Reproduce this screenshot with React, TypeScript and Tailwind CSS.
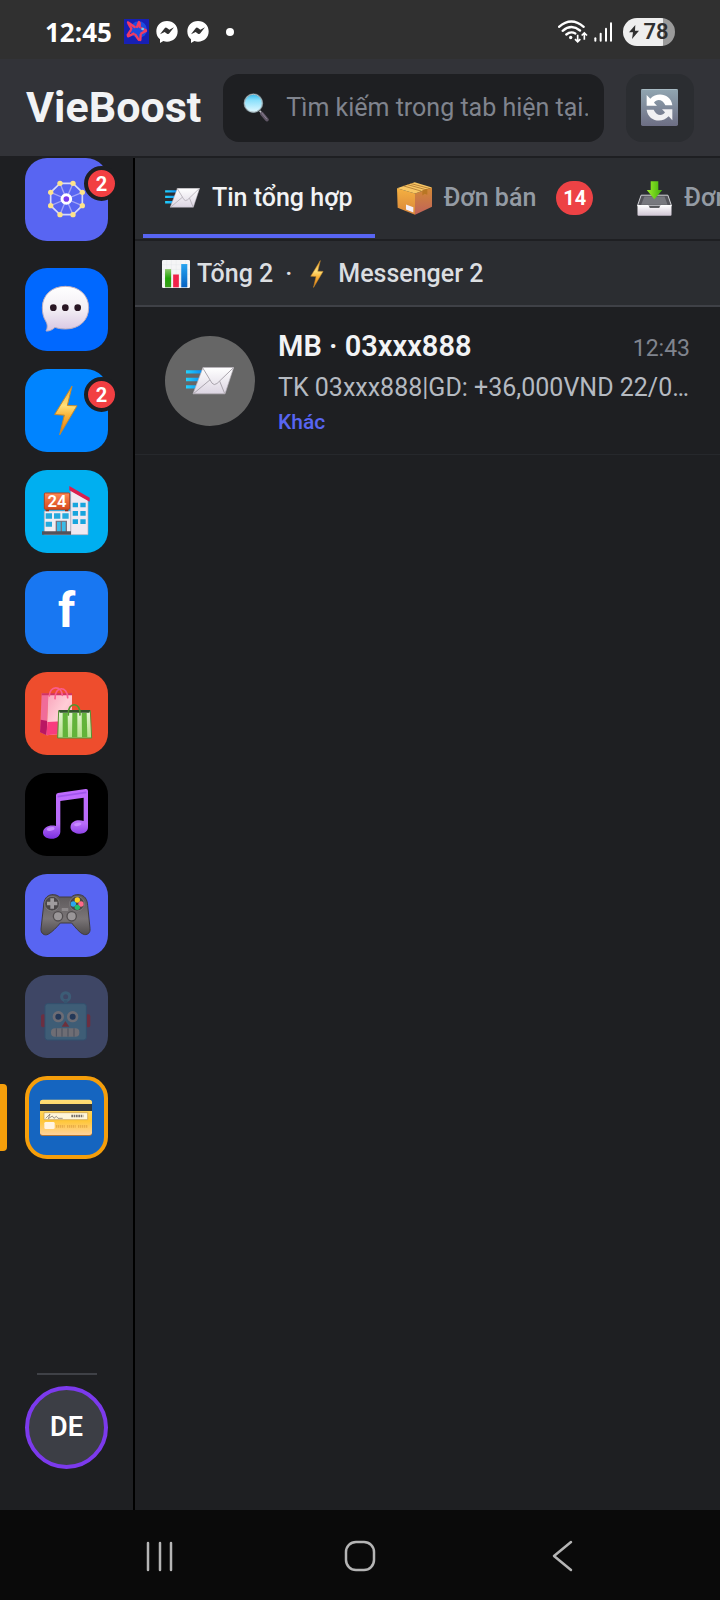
import React from 'react';
import clsx from 'clsx';

/* ---------- Shared glyphs ---------- */

const MailGlyph = ({ className }: { className: string }) => (
  <svg viewBox="0 0 144 83" className={className} aria-hidden="true">
    <defs>
      <linearGradient id="mailPaper" x1="0" y1="0" x2="0" y2="1">
        <stop offset="0" stopColor="#ffffff" />
        <stop offset="1" stopColor="#dcd5e2" />
      </linearGradient>
      <linearGradient id="mailSpeed" x1="0" x2="1">
        <stop offset="0" stopColor="#22d3ff" />
        <stop offset="1" stopColor="#0a8df0" />
      </linearGradient>
    </defs>
    <path d="M0 9h48v10H0zM0 32h42v10H0zM0 54h32v10H0z" fill="url(#mailSpeed)" />
    <path d="M51 1H143L117 80H21Z" fill="url(#mailPaper)" stroke="#b9b4bd" strokeWidth="2" strokeLinejoin="round" />
    <path d="M50 2 78 48Q84 56 93 49L142 2M23 79 72 38M116 79 101 42" fill="none" stroke="#aaa5ad" strokeWidth="3" />
  </svg>
);

const BoltGlyph = ({ className }: { className: string }) => (
  <svg viewBox="86 46 72 152" className={className} aria-hidden="true">
    <defs>
      <linearGradient id="boltFill" x1="0" y1="0" x2="0" y2="1">
        <stop offset="0" stopColor="#f0a52c" />
        <stop offset="0.4" stopColor="#ffe07a" />
        <stop offset="0.6" stopColor="#fbb53a" />
        <stop offset="1" stopColor="#e2780e" />
      </linearGradient>
    </defs>
    <path d="M140 49 88 134 117 136 103 195 155 108 126 107Z" fill="url(#boltFill)" stroke="#c98a2a" strokeWidth="3" strokeLinejoin="round" />
  </svg>
);

const BoxGlyph = () => (
  <svg viewBox="0 0 105 98" className="w-[35px] h-[33px] shrink-0" aria-hidden="true">
    <defs>
      <linearGradient id="boxLeft" x1="0" y1="0" x2="0" y2="1">
        <stop offset="0" stopColor="#f5b141" />
        <stop offset="1" stopColor="#d9853a" />
      </linearGradient>
      <linearGradient id="boxRight" x1="0" y1="0" x2="0" y2="1">
        <stop offset="0" stopColor="#d38a35" />
        <stop offset="1" stopColor="#c0625a" />
      </linearGradient>
    </defs>
    <path d="M0 18 54 34V98L2 77Z" fill="url(#boxLeft)" />
    <path d="M54 34 105 16V74L54 98Z" fill="url(#boxRight)" />
    <path d="M0 18 53 0 105 16 54 34Z" fill="#f8c765" />
    <path d="M30 7 88 23M41 4 98 19M19 11 73 27" stroke="#9a6022" strokeWidth="2" />
    <path d="M76 25 91 20V38L83 35 76 40Z" fill="#b87624" />
    <path d="M27 67 49 75V91L27 82Z" fill="#f4eef7" />
  </svg>
);

const InboxGlyph = () => (
  <svg viewBox="0 0 105 106" className="w-[35px] h-[35px] shrink-0" aria-hidden="true">
    <defs>
      <linearGradient id="arrowGreen" x1="0" x2="1">
        <stop offset="0" stopColor="#9df02a" />
        <stop offset="1" stopColor="#3fae0c" />
      </linearGradient>
      <linearGradient id="trayFront" x1="0" y1="0" x2="0" y2="1">
        <stop offset="0" stopColor="#ffffff" />
        <stop offset="1" stopColor="#cfc5d4" />
      </linearGradient>
    </defs>
    <path d="M12 43H93L104 75H1Z" fill="#54545a" stroke="#d5d5da" strokeWidth="3" />
    <path d="M22 47H83L92 72H12Z" fill="#77787e" />
    <path d="M1 73H32Q36 73 38 81H67Q69 73 73 73H104V102Q104 105 101 105H4Q1 105 1 102Z" fill="url(#trayFront)" />
    <path d="M41 1H64V27H76L52 55 29 27H41Z" fill="url(#arrowGreen)" />
  </svg>
);

const ChartGlyph = () => (
  <svg viewBox="0 0 83 83" className="w-7 h-7 shrink-0" aria-hidden="true">
    <defs>
      <linearGradient id="barGreen" x1="0" y1="0" x2="0" y2="1">
        <stop offset="0" stopColor="#8cc96a" />
        <stop offset="0.5" stopColor="#23a408" />
        <stop offset="1" stopColor="#3a9d1b" />
      </linearGradient>
      <linearGradient id="barBlue" x1="0" y1="0" x2="0" y2="1">
        <stop offset="0" stopColor="#27a4f0" />
        <stop offset="1" stopColor="#0561c2" />
      </linearGradient>
    </defs>
    <rect width="83" height="83" rx="4" fill="#f5f5f6" />
    <path d="M0 14h83M0 28h83M0 42h83M0 56h83M0 70h83M14 0v83M28 0v83M42 0v83M56 0v83M70 0v83" stroke="#e2e4e8" strokeWidth="1" />
    <path d="M9 27h18v54H9z" fill="url(#barGreen)" />
    <path d="M33 43h17v38H33z" fill="#f02349" />
    <path d="M57 12h18v69H57z" fill="url(#barBlue)" />
  </svg>
);

const SearchGlyph = () => (
  <svg viewBox="0 0 78 88" className="w-[26px] h-[29px] shrink-0" aria-hidden="true">
    <defs>
      <linearGradient id="lens" x1="0" y1="0" x2="0" y2="1">
        <stop offset="0" stopColor="#2fb6ea" />
        <stop offset="0.35" stopColor="#8be0fb" />
        <stop offset="1" stopColor="#e5f9ff" />
      </linearGradient>
    </defs>
    <path d="M50 54 60 65" stroke="#c6c6cc" strokeWidth="5" />
    <path d="M57 63 72 81" stroke="#5f5665" strokeWidth="11" strokeLinecap="round" />
    <path d="M57 61 71 78" stroke="#8b8192" strokeWidth="3" strokeLinecap="round" />
    <circle cx="31" cy="31" r="28" fill="url(#lens)" stroke="#5a6970" strokeWidth="4" />
    <circle cx="31" cy="31" r="27" fill="none" stroke="#d9e9ee" strokeWidth="2" />
  </svg>
);

const RefreshGlyph = () => (
  <svg viewBox="0 0 111 111" className="w-[37px] h-[37px]" aria-hidden="true">
    <defs>
      <linearGradient id="refreshBg" x1="0" y1="0" x2="0" y2="1">
        <stop offset="0" stopColor="#91a6b1" />
        <stop offset="1" stopColor="#6d6e84" />
      </linearGradient>
    </defs>
    <rect width="111" height="111" rx="5" fill="url(#refreshBg)" />
    <path d="M1 4Q1 1 5 1H106Q110 1 110 4" fill="none" stroke="#b9cbd3" strokeWidth="2" />
    <path d="M17 18V50H48L39 41C47 29 65 30 73 49H94C90 14 48 7 28 29Z" fill="#ffffff" />
    <path d="M94 94V61H63L72 70C64 82 46 81 38 62H17C21 97 63 104 83 82Z" fill="#f0f0f2" />
  </svg>
);

/* ---------- Sidebar artwork, all on the same tile grid ---------- */

const Tile = ({ children }: { children: React.ReactNode }) => (
  <svg viewBox="0 0 249 249" className="w-full h-full" aria-hidden="true">{children}</svg>
);

const wheelPoints = [[105, 76], [144, 76], [172, 103], [172, 143], [144, 170], [105, 170], [77, 143], [77, 103]];

const WheelArt = () => (
  <Tile>
    {wheelPoints.map(([x, y]) => (
      <line key={`${x}-${y}`} x1="124" y1="123" x2={x} y2={y} stroke="#a3a6f8" strokeWidth="4" />
    ))}
    <polygon points={wheelPoints.map((p) => p.join(',')).join(' ')} fill="none" stroke="#d6d9fc" strokeWidth="5" />
    {wheelPoints.map(([x, y]) => (
      <circle key={`${x}-${y}`} cx={x} cy={y} r="8" fill="#fde38a" />
    ))}
    <circle cx="124" cy="123" r="13" fill="#7c3aed" stroke="#ffffff" strokeWidth="9" />
  </Tile>
);

const ChatArt = () => (
  <Tile>
    <defs>
      <linearGradient id="bubble" x1="0" y1="0" x2="0" y2="1">
        <stop offset="0" stopColor="#ffffff" />
        <stop offset="0.5" stopColor="#f3eff5" />
        <stop offset="1" stopColor="#d8c6e2" />
      </linearGradient>
    </defs>
    <path d="M121 55C163 55 191 82 191 119 191 157 163 183 121 183 108 183 98 181 90 178 82 186 72 190 63 189 69 178 67 168 62 159 55 148 52 135 52 119 52 82 80 55 121 55Z" fill="url(#bubble)" stroke="#b9adc0" strokeWidth="3" />
    <circle cx="85" cy="119" r="10" fill="#2a1724" />
    <circle cx="121" cy="119" r="10" fill="#2a1724" />
    <circle cx="158" cy="119" r="10" fill="#2a1724" />
  </Tile>
);

const StoreArt = () => (
  <Tile>
    <defs>
      <linearGradient id="storeSign" x1="0" y1="0" x2="0" y2="1">
        <stop offset="0" stopColor="#ff8a55" />
        <stop offset="1" stopColor="#d84a1d" />
      </linearGradient>
    </defs>
    <path d="M137 60 189 90V194H137Z" fill="#efe9f1" stroke="#b5a8b5" strokeWidth="2" />
    <path d="M58 123H137V194H58Z" fill="#f1edf2" stroke="#b5a8b5" strokeWidth="2" />
    <path d="M133 48 194 83V95L133 61Z" fill="#d91f4e" />
    <path d="M62 118h10v6H62zM120 118h10v6H120z" fill="#8d2f1c" />
    <rect x="58" y="69" width="76" height="49" rx="3" fill="url(#storeSign)" stroke="#b6431f" strokeWidth="3" />
    <text x="96" y="110" textAnchor="middle" fontFamily="Roboto, sans-serif" fontSize="50" fontWeight="600" fill="#ffffff">24</text>
    <path d="M62 130h19v16H62zM87 130h19v16H87zM112 130h19v16H112zM62 155h19v15H62z" fill="#25a9dc" />
    <path d="M92 152h34v36H92z" fill="#7b6f7b" />
    <path d="M96 155h11v31H96zM111 155h11v31H111z" fill="#39bce8" />
    <path d="M143 98h16v14H143zM166 98h16v14H166zM143 123h16v14H143zM166 123h16v14H166zM143 148h16v14H143zM166 148h16v14H166z" fill="#18a5dd" />
    <path d="M51 184H138V194H51Z" fill="#53525a" />
  </Tile>
);

const BagsArt = () => (
  <Tile>
    <defs>
      <linearGradient id="pinkBag" x1="0" y1="0" x2="1" y2="1">
        <stop offset="0" stopColor="#f9a3bb" />
        <stop offset="0.5" stopColor="#ffcdd6" />
        <stop offset="1" stopColor="#ff9dbb" />
      </linearGradient>
      <linearGradient id="greenBag" x1="0" y1="0" x2="0" y2="1">
        <stop offset="0" stopColor="#e6f5d6" />
        <stop offset="1" stopColor="#b4df88" />
      </linearGradient>
    </defs>
    <path d="M50 64 70 66 65 190 45 181Z" fill="#f06c99" />
    <path d="M47 143 68 147 65 190 45 181Z" fill="#b91763" />
    <path d="M70 66H141V182L65 190Z" fill="url(#pinkBag)" />
    <path d="M67 150 141 146V182L65 190Z" fill="#f83c7e" />
    <path d="M50 64H141V70H50Z" fill="#d13463" />
    <path d="M73 72C73 40 111 40 112 70M90 80C89 41 128 41 128 77" fill="none" stroke="#fb5c8d" strokeWidth="5" strokeLinecap="round" />
    <path d="M101 116H196L200 198H98Z" fill="url(#greenBag)" stroke="#578e32" strokeWidth="3" />
    <path d="M113 123h15l1 73h-16zM142 123h15v73h-16zM170 123h15l2 73h-16z" fill="#62b33a" />
    <path d="M101 114H196L193 122H104Z" fill="#31552b" />
    <path d="M130 129C126 88 169 88 165 129" fill="none" stroke="#4e982e" strokeWidth="5" strokeLinecap="round" />
  </Tile>
);

const MusicArt = () => (
  <Tile>
    <defs>
      <linearGradient id="note" x1="0" y1="0" x2="0" y2="1">
        <stop offset="0" stopColor="#c06bff" />
        <stop offset="0.7" stopColor="#b76cf8" />
        <stop offset="1" stopColor="#7a2fe0" />
      </linearGradient>
    </defs>
    <path d="M93 67Q93 61 99 60L182 48Q189 47 189 54V163C189 176 175 184 161 182 145 180 134 171 137 158 140 143 160 138 176 144V74L106 84V177C105 191 91 199 77 197 62 196 53 188 54 177 56 162 74 154 93 159Z" fill="url(#note)" />
    <path d="M98 71 184 58" stroke="#a156ed" strokeWidth="5" />
    <ellipse cx="77" cy="168" rx="12" ry="5" fill="#c78cff" transform="rotate(-12 77 168)" />
    <ellipse cx="158" cy="154" rx="11" ry="5" fill="#c78cff" transform="rotate(-12 158 154)" />
  </Tile>
);

const GamepadArt = () => (
  <Tile>
    <defs>
      <linearGradient id="pad" x1="0" y1="0" x2="0" y2="1">
        <stop offset="0" stopColor="#5b5759" />
        <stop offset="0.6" stopColor="#7a7577" />
        <stop offset="1" stopColor="#4f4b4d" />
      </linearGradient>
    </defs>
    <path d="M80 62C94 61 99 66 104 69H139C145 64 151 61 163 62 179 64 187 76 188 94L195 163C197 179 185 184 175 181 162 175 151 160 140 147H106C94 161 82 174 69 181 59 186 47 179 48 165L56 93C57 76 65 64 80 62Z" fill="url(#pad)" stroke="#403c3e" strokeWidth="3" />
    <circle cx="81" cy="89" r="22" fill="#4b4748" stroke="#8d898b" strokeWidth="2" />
    <path d="M76 73h11v10h10v11H87v10H76V94H66V83h10z" fill="#a09c9e" />
    <circle cx="156" cy="89" r="22" fill="#4b4748" stroke="#8d898b" strokeWidth="2" />
    <circle cx="157" cy="78" r="8" fill="#ffd018" />
    <circle cx="145" cy="90" r="8" fill="#2ba9ed" />
    <circle cx="168" cy="90" r="8" fill="#ff6989" />
    <circle cx="157" cy="100" r="8" fill="#24bd69" />
    <rect x="110" y="102" width="20" height="9" rx="2" fill="#8d898b" />
    <circle cx="99" cy="127" r="14" fill="#9a9698" stroke="#514d4f" strokeWidth="4" />
    <circle cx="140" cy="127" r="14" fill="#9a9698" stroke="#514d4f" strokeWidth="4" />
  </Tile>
);

const RobotArt = () => (
  <Tile>
    <circle cx="122" cy="65" r="12" fill="none" stroke="#6ab8f5" strokeWidth="9" />
    <path d="M117 76h10v12h-10z" fill="#5aa5e0" />
    <rect x="48" y="118" width="14" height="39" rx="6" fill="#df4870" />
    <rect x="182" y="118" width="14" height="39" rx="6" fill="#df4870" />
    <rect x="60" y="86" width="124" height="109" rx="8" fill="#70baf5" stroke="#4f98dd" strokeWidth="3" />
    <circle cx="100" cy="125" r="17" fill="#e1dfee" />
    <circle cx="143" cy="125" r="17" fill="#e1dfee" />
    <circle cx="100" cy="125" r="9" fill="#2c5fa9" />
    <circle cx="143" cy="125" r="9" fill="#2c5fa9" />
    <path d="M121 138 133 155H110Z" fill="#e04e65" />
    <rect x="78" y="160" width="85" height="25" rx="12" fill="#e6e2ee" />
    <path d="M94 160v25M111 160v25M129 160v25M147 160v25" stroke="#8795b6" strokeWidth="3" />
  </Tile>
);

const CardArt = () => (
  <svg viewBox="12 12 225 225" className="w-full h-full" aria-hidden="true">
    <defs>
      <linearGradient id="cardFill" x1="0" y1="0" x2="0" y2="1">
        <stop offset="0" stopColor="#ffdf79" />
        <stop offset="0.6" stopColor="#ffc738" />
        <stop offset="1" stopColor="#ffd29a" />
      </linearGradient>
    </defs>
    <rect x="45" y="72" width="156" height="108" rx="8" fill="#b57634" />
    <rect x="45" y="71" width="156" height="106" rx="8" fill="url(#cardFill)" />
    <path d="M45 84H201V105H45Z" fill="#30363a" />
    <path d="M57 110H188V131H57Z" fill="#fff6d9" stroke="#c29a51" strokeWidth="2" />
    <path d="M62 127 75 114 70 128 82 120 87 127 94 121 99 127H113" fill="none" stroke="#6b6460" strokeWidth="2" />
    <path d="M139 120H175" stroke="#77706a" strokeWidth="7" strokeDasharray="5 2" />
    <rect x="58" y="138" width="31" height="21" rx="4" fill="#fff4e2" />
    <path d="M93 151H119M126 151H152M159 151H187" stroke="#e9ad48" strokeWidth="8" strokeDasharray="4 2" />
  </svg>
);

/* ---------- Data ---------- */

interface Channel {
  id: string;
  label: string;
  tile: string;
  art: React.ReactNode;
  badge?: number;
  active?: boolean;
}

const channels: Channel[] = [
  { id: 'zalo', label: 'Zalo', tile: 'bg-[#0068ff]', art: <ChatArt /> },
  { id: 'messenger', label: 'Messenger', tile: 'bg-[#0084ff] pr-0.5', art: <BoltGlyph className="w-6 h-[51px]" />, badge: 2 },
  { id: 'store', label: 'Cửa hàng', tile: 'bg-[#00aff0]', art: <StoreArt /> },
  { id: 'facebook', label: 'Facebook', tile: 'bg-[#1877f2] pb-1', art: <span className="text-5xl font-bold leading-none text-white">f</span> },
  { id: 'shopee', label: 'Shopee', tile: 'bg-[#ee4d2d]', art: <BagsArt /> },
  { id: 'tiktok', label: 'TikTok', tile: 'bg-black', art: <MusicArt /> },
  { id: 'discord', label: 'Discord', tile: 'bg-[#5865f2]', art: <GamepadArt /> },
  { id: 'bot', label: 'Bot', tile: 'bg-[#6f82c9] opacity-40', art: <RobotArt /> },
  { id: 'bank', label: 'Ngân hàng', tile: 'bg-[#1565c0] border-4 border-[#f59e0b]', art: <CardArt />, active: true },
];

const Badge = ({ count }: { count: number }) => (
  <span className="absolute -right-[11px] top-2 w-[35px] h-[35px] rounded-full border-4 border-[#1e1f22] bg-[#f23f42] flex items-center justify-center text-xl font-bold leading-none text-white">
    {count}
  </span>
);

const ChannelButton = ({ channel }: { channel: Channel }) => (
  <div className="relative flex justify-center w-full">
    {channel.active && <span className="absolute left-0 top-2 w-[7px] h-[67px] rounded-r bg-[#f59e0b]" />}
    <div className="relative">
      <button
        aria-label={channel.label}
        className={clsx('w-[83px] h-[83px] rounded-[22px] overflow-hidden flex items-center justify-center', channel.tile)}
      >
        {channel.art}
      </button>
      {channel.badge && <Badge count={channel.badge} />}
    </div>
  </div>
);

/* ---------- Status bar ---------- */

const MessengerMark = () => (
  <svg viewBox="0 0 66 66" className="w-[22px] h-[22px]" aria-hidden="true">
    <path d="M33 0C14 0 1 13 1 31c0 11 4 19 11 24v11l10-6c4 1 7 2 11 2 19 0 32-13 32-31S52 0 33 0Z" fill="#fff" />
    <path d="m12 40 14-18q3-4 7-1l7 5 14-7-14 18q-3 4-7 1l-7-5Z" fill="#303030" />
  </svg>
);

const StatusBar = () => (
  <div className="h-[59px] pt-1 px-[45px] bg-[#303030] flex items-center justify-between shrink-0 text-white">
    <div className="flex items-center">
      <span className="w-[79px] font-['Open_Sans',sans-serif] text-[26px] leading-8 font-bold">12:45</span>
      <svg viewBox="0 0 75 75" className="w-[25px] h-[25px]" aria-hidden="true">
        <rect width="75" height="75" fill="#1720b4" />
        <circle cx="44" cy="32" r="25" fill="#1c4ce0" />
        <g stroke="#f23b62" strokeWidth="7" strokeLinecap="round">
          <path d="M45 9 39 24M32 24 12 10M13 13 22 29M20 34 11 48M12 52 29 44M34 47 44 62M49 63 50 47M52 43 66 36M66 34 53 28M47 24 47 12" strokeDasharray="12 2" />
        </g>
        <circle cx="56" cy="30" r="4" fill="#5ed2ff" />
      </svg>
      <div className="flex items-center gap-[9px] ml-[7px]">
        <MessengerMark />
        <MessengerMark />
      </div>
      <span className="ml-[17px] w-2 h-2 rounded-full bg-white" />
    </div>
    <div className="flex items-center">
      <svg viewBox="0 0 90 68" className="w-[30px] h-[23px]" fill="none" stroke="#fff" aria-hidden="true">
        <path d="M3 20Q40-12 77 20M14 32Q40 10 66 31M25 43Q38 32 52 40" strokeWidth="7" strokeLinecap="round" />
        <circle cx="38" cy="52" r="5" fill="#fff" stroke="none" />
        <path d="M59 44V64M51 57 59 65 67 57M79 59V39M71 46 79 38 87 46" strokeWidth="5" />
      </svg>
      <svg viewBox="0 0 57 60" className="w-[19px] h-5 ml-1.5" fill="#fff" aria-hidden="true">
        <rect x="1" y="46" width="6" height="13" rx="3" />
        <rect x="17" y="32" width="6" height="27" rx="3" />
        <rect x="33" y="17" width="6" height="42" rx="3" />
        <rect x="48" y="1" width="6" height="58" rx="3" />
      </svg>
      <div className="ml-2.5 w-[52px] h-7 rounded-full overflow-hidden flex items-center justify-center bg-linear-to-r from-[#eeeeee] from-77% to-[#9b9b9b] to-77% text-[#303030]">
        <svg viewBox="0 0 30 42" className="w-2.5 h-3.5" aria-hidden="true">
          <path d="M19 0 0 22H12L9 42 30 17H18Z" fill="#303030" />
        </svg>
        <span className="ml-1 text-[22px] leading-7 font-semibold">78</span>
      </div>
    </div>
  </div>
);

/* ---------- Layout parts ---------- */

const Header = () => (
  <header className="h-[99px] px-[26px] flex items-center shrink-0 bg-[#323338] border-b-2 border-[#1e1f22]">
    <h1 className="text-[43px] leading-none font-bold text-[#f2f3f5]">VieBoost</h1>
    <label className="ml-[22px] flex-1 min-w-0 h-[68px] rounded-2xl bg-[#1e1f22] flex items-center gap-[17px] pl-5 pr-4">
      <SearchGlyph />
      <input
        type="text"
        aria-label="Tìm kiếm"
        placeholder="Tìm kiếm trong tab hiện tại."
        className="flex-1 min-w-0 bg-transparent outline-none text-[25px] text-[#f2f3f5] placeholder:text-[#80848e]"
      />
    </label>
    <button aria-label="Làm mới" className="ml-[22px] w-[68px] h-[68px] shrink-0 rounded-2xl bg-[#2b2d31] pr-0.5 flex items-center justify-center">
      <RefreshGlyph />
    </button>
  </header>
);

const Sidebar = () => (
  <aside className="w-[135px] shrink-0 bg-[#1e1f22] border-r-2 border-black flex flex-col items-center">
    <div className="relative">
      <button aria-label="Tất cả" className="block w-[83px] h-[83px] rounded-[22px] bg-[#5865f2]">
        <WheelArt />
      </button>
      <Badge count={2} />
    </div>
    <nav className="w-full mt-[27px] flex flex-col gap-[18px]">
      {channels.map((c) => <ChannelButton key={c.id} channel={c} />)}
    </nav>
    <div className="mt-auto mb-[41px] flex flex-col items-center gap-[11px]">
      <hr className="w-[60px] border-0 h-0.5 bg-[#3f4147]" />
      <button className="w-[83px] h-[83px] rounded-full border-4 border-[#7c3aed] bg-[#3c3e45] text-[27px] font-semibold text-white">DE</button>
    </div>
  </aside>
);

const tabClass = 'h-full shrink-0 px-[22px] pt-1 flex items-center gap-3 border-b-4 text-[25px] font-medium whitespace-nowrap';

const Tabs = () => (
  <div role="tablist" className="h-[83px] pl-2 pb-px flex shrink-0 overflow-hidden bg-[#2b2d31] border-b-2 border-[#1e1f22]">
    <button role="tab" aria-selected="true" className={`${tabClass} border-[#5865f2] text-[#f2f3f5]`}>
      <MailGlyph className="w-[35px] h-5 shrink-0" />
      Tin tổng hợp
    </button>
    <button role="tab" aria-selected="false" className={`${tabClass} border-transparent text-[#949ba4]`}>
      <BoxGlyph />
      Đơn bán
      <span className="ml-2 w-[37px] h-[34px] rounded-[17px] bg-[#ed4245] flex items-center justify-center text-xl font-bold leading-none text-white">14</span>
    </button>
    <button role="tab" aria-selected="false" className={`${tabClass} border-transparent text-[#949ba4]`}>
      <InboxGlyph />
      Đơn mua
    </button>
  </div>
);

const Summary = () => (
  <div className="h-[66px] pt-0.5 pl-[27px] flex items-center shrink-0 bg-[#2b2d31] border-b-2 border-[#3f4147] text-[25px] font-medium text-[#dbdee1]">
    <ChartGlyph />
    <span className="ml-[7px]">Tổng 2</span>
    <span className="mx-3">·</span>
    <BoltGlyph className="w-[26px] h-7" />
    <span className="ml-2">Messenger 2</span>
  </div>
);

const MessageRow = () => (
  <a href="#mb" className="flex items-center gap-[23px] h-[148px] px-[30px] border-b border-[#26282c]">
    <span className="w-[90px] h-[90px] shrink-0 rounded-full bg-[#666666] flex items-center justify-center">
      <MailGlyph className="w-12 h-7" />
    </span>
    <span className="flex-1 min-w-0 pt-0.5 flex flex-col">
      <span className="flex items-baseline justify-between">
        <span className="text-[29px] leading-10 font-semibold text-[#f2f3f5]">MB · 03xxx888</span>
        <span className="text-[23px] leading-10 text-[#80848e]">12:43</span>
      </span>
      <span className="text-[25px] leading-[38px] text-[#b5bac1] truncate">TK 03xxx888|GD: +36,000VND 22/04/26 12:43</span>
      <span className="text-[21px] leading-[30px] font-medium text-[#5865f2]">Khác</span>
    </span>
  </a>
);

const NavBar = () => (
  <nav className="h-[90px] pt-0.5 px-[20%] shrink-0 flex items-center justify-between bg-[#0a0a0a]">
    <button aria-label="Gần đây">
      <svg viewBox="0 0 32 32" className="w-8 h-8" fill="none" stroke="#b5b5b5" strokeWidth="2.5" strokeLinecap="round">
        <path d="M4 3v27M16 3v27M27 3v27" />
      </svg>
    </button>
    <button aria-label="Trang chủ">
      <svg viewBox="0 0 32 32" className="w-8 h-8" fill="none" stroke="#b5b5b5" strokeWidth="2.5">
        <rect x="2" y="2" width="28" height="28" rx="10" />
      </svg>
    </button>
    <button aria-label="Quay lại">
      <svg viewBox="0 0 32 32" className="w-8 h-8" fill="none" stroke="#b5b5b5" strokeWidth="2.5" strokeLinecap="round" strokeLinejoin="round">
        <path d="M27 2 10 16 27 30" />
      </svg>
    </button>
  </nav>
);

export default function App() {
  return (
    <div className="min-h-screen flex flex-col overflow-hidden bg-[#1e1f22] font-[Roboto,'Noto_Sans',sans-serif]">
      <StatusBar />
      <Header />
      <div className="flex-1 flex">
        <Sidebar />
        <main className="flex-1 min-w-0 flex flex-col bg-[#1e1f22]">
          <Tabs />
          <Summary />
          <MessageRow />
        </main>
      </div>
      <NavBar />
    </div>
  );
}
